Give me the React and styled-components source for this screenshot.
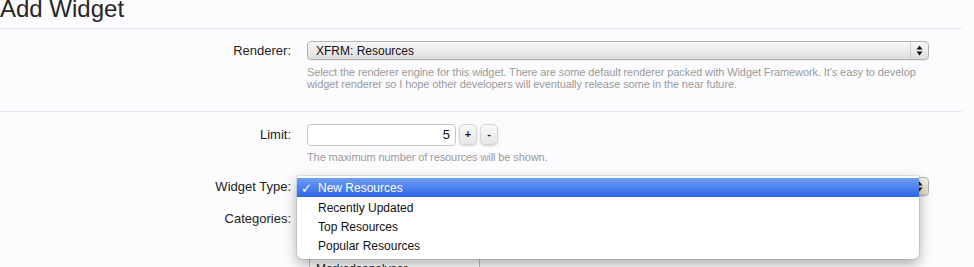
import React from "react";
import styled, { createGlobalStyle } from "styled-components";

const Global = createGlobalStyle`
  html, body { margin: 0; padding: 0; background: #fcfcff; overflow: hidden; }
  body { font-family: "Liberation Sans", Arial, sans-serif; color: #222; }
`;

const Page = styled.div`
  width: 962px;
`;

const Title = styled.h1`
  margin: -7px 0 0;
  padding: 0 0 3px;
  font: 400 24px/32px "Liberation Sans", Arial, sans-serif;
  color: #262626;
  border-bottom: 1px solid #dde8ec;
`;

const Section = styled.div`
  display: flex;
  flex-direction: column;
  padding: ${(p) => p.$pt}px 0 ${(p) => p.$pb}px;
  border-bottom: ${(p) => (p.$divider ? "1px solid #dde8ec" : "none")};
`;

const Row = styled.div`
  display: grid;
  grid-template-columns: 291px 622px;
  column-gap: 16px;
  align-items: start;
  margin-top: ${(p) => p.$mt || 0}px;
`;

const Label = styled.label`
  text-align: right;
  font-size: 13px;
  line-height: ${(p) => p.$lh || 19}px;
  color: #222;
`;

const Control = styled.div`
  position: relative;
  display: flex;
  flex-direction: column;
  align-items: flex-start;
`;

const Select = styled.div`
  width: 622px;
  height: 19px;
  box-sizing: border-box;
  border: 1px solid #b4b4b4;
  border-radius: 4px;
  background: ${(p) =>
    p.$focus
      ? "linear-gradient(#f4f4e6, #dcdcc4)"
      : "linear-gradient(#f8f8f8, #dedede)"};
  display: flex;
  align-items: center;
  font-size: 12px;
  color: #111;
  box-shadow: 0 1px 1px rgba(0, 0, 0, 0.08);
`;

const SelectText = styled.span`
  flex: 1;
  padding-left: 8px;
`;

const Arrows = styled.span`
  width: 17px;
  height: 100%;
  border-left: 1px solid #cfcfcf;
  display: flex;
  align-items: center;
  justify-content: center;
`;

const Hint = styled.p`
  margin: ${(p) => p.$mt || 0}px 0 0;
  font-size: 11px;
  line-height: 12px;
  letter-spacing: -0.1px;
  color: #9a9a9a;
  width: 622px;
`;

const SpinRow = styled.div`
  display: flex;
  gap: 3px;
  align-items: flex-start;
`;

const NumberInput = styled.div`
  width: 149px;
  height: 22px;
  box-sizing: border-box;
  border: 1px solid #c6c6c6;
  border-radius: 4px;
  background: #fff;
  font-size: 13px;
  line-height: 20px;
  text-align: right;
  padding-right: 5px;
  color: #111;
`;

const SpinButton = styled.button`
  width: 18px;
  height: 21px;
  padding: 0;
  border: 1px solid #d6d6d6;
  border-radius: 5px;
  background: linear-gradient(#fafafa, #e6e6e6);
  box-shadow: 0 1px 2px rgba(0, 0, 0, 0.18);
  font: 700 11px/19px "Liberation Sans", Arial, sans-serif;
  color: #222;
`;

const ListBox = styled.div`
  width: 171px;
  height: 80px;
  box-sizing: border-box;
  border: 1px solid #c0c0c0;
  background: #fff;
  margin-left: 2px;
`;

const ListItem = styled.div`
  height: 16px;
  font-size: 12px;
  line-height: 16px;
  padding-left: 6px;
  color: #222;
`;

const Popup = styled.div`
  position: absolute;
  left: -10px;
  top: -1px;
  width: 622px;
  box-sizing: border-box;
  padding: 2px 0 4px;
  background: #fff;
  border-radius: 2px 2px 6px 6px;
  box-shadow: 0 5px 14px rgba(0, 0, 0, 0.32), 0 0 0 1px rgba(0, 0, 0, 0.08);
  z-index: 2;
`;

const Option = styled.div`
  position: relative;
  height: 19px;
  line-height: 21px;
  padding-left: 21px;
  margin-bottom: ${(p) => (p.$active ? 1 : 0)}px;
  font-size: 12px;
  color: ${(p) => (p.$active ? "#fff" : "#111")};
  background: ${(p) =>
    p.$active ? "linear-gradient(#6f9ef4, #2c67e7)" : "transparent"};
`;

const Check = styled.span`
  position: absolute;
  left: 4px;
  top: 0;
  font-size: 13px;
  font-weight: 700;
  font-family: "DejaVu Sans", sans-serif;
`;

const ArrowsIcon = () => (
  <svg width="7" height="11" viewBox="0 0 7 11">
    <path d="M3.5 0.5 L6.5 4.5 H0.5 Z" fill="#111" />
    <path d="M3.5 10.5 L6.5 6.5 H0.5 Z" fill="#111" />
  </svg>
);

const options = ["New Resources", "Recently Updated", "Top Resources", "Popular Resources"];

export default function App() {
  return (
    <>
      <Global />
      <Page>
        <Title>Add Widget</Title>

        <Section $pt={12} $pb={21} $divider>
          <Row>
            <Label>Renderer:</Label>
            <Control>
              <Select>
                <SelectText>XFRM: Resources</SelectText>
                <Arrows>
                  <ArrowsIcon />
                </Arrows>
              </Select>
              <Hint $mt={6}>
                Select the renderer engine for this widget. There are some default renderer packed with Widget
                Framework. It's easy to develop widget renderer so I hope other developers will eventually release
                some in the near future.
              </Hint>
            </Control>
          </Row>
        </Section>

        <Section $pt={12} $pb={0}>
          <Row>
            <Label $lh={22}>Limit:</Label>
            <Control>
              <SpinRow>
                <NumberInput>5</NumberInput>
                <SpinButton>+</SpinButton>
                <SpinButton>-</SpinButton>
              </SpinRow>
              <Hint $mt={5}>The maximum number of resources will be shown.</Hint>
            </Control>
          </Row>

          <Row $mt={14}>
            <Label>Widget Type:</Label>
            <Control>
              <Select $focus>
                <SelectText>New Resources</SelectText>
                <Arrows>
                  <ArrowsIcon />
                </Arrows>
              </Select>
              <Popup>
                {options.map((o, i) => (
                  <Option key={o} $active={i === 0}>
                    {i === 0 && <Check>✓</Check>}
                    {o}
                  </Option>
                ))}
              </Popup>
            </Control>
          </Row>

          <Row $mt={16}>
            <Label $lh={14}>Categories:</Label>
            <Control>
              <ListBox>
                <ListItem>Alle kategorier</ListItem>
                <ListItem>Nyheder</ListItem>
                <ListItem>Guides</ListItem>
                <ListItem>Markedsanalyser</ListItem>
              </ListBox>
            </Control>
          </Row>
        </Section>
      </Page>
    </>
  );
}
